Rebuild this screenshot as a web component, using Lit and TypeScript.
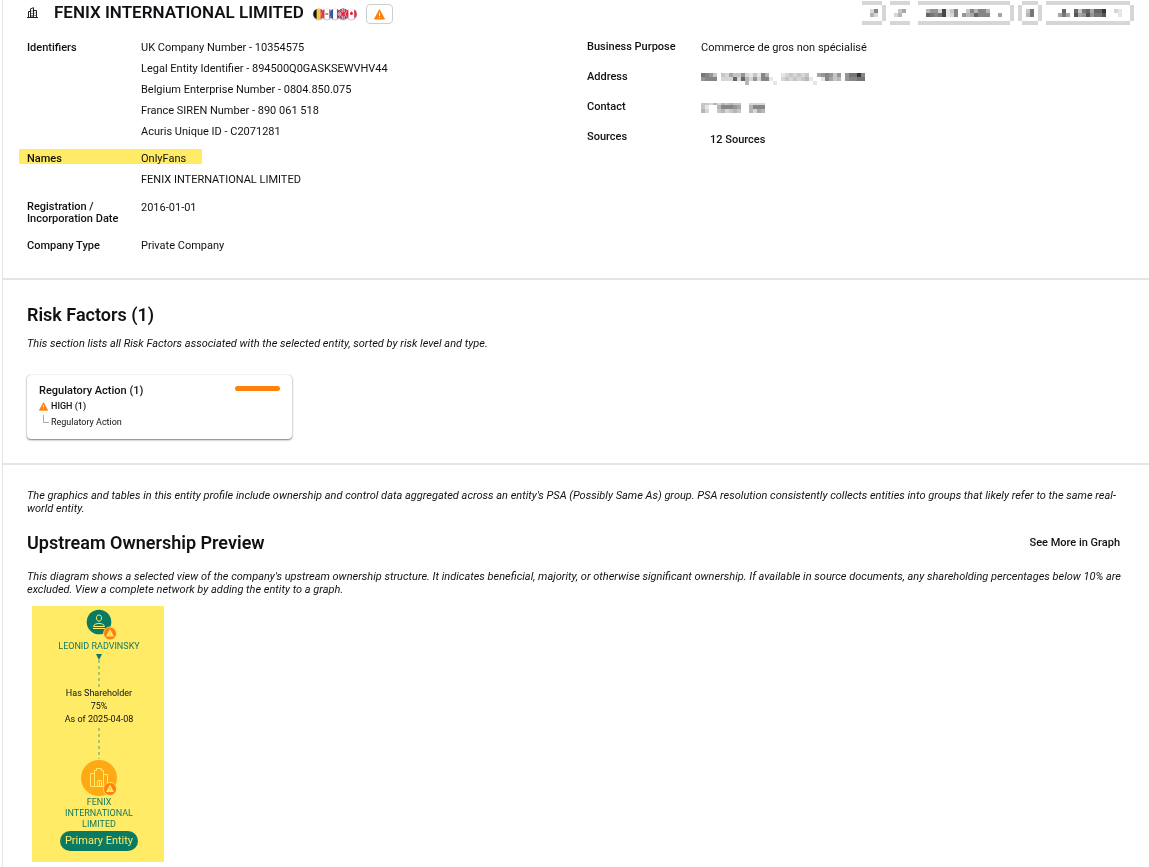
import { LitElement, html, svg, css } from "lit";
import { customElement, property } from "lit/decorators.js";

/** Redacted content: rows of hex grey levels, one digit per 4px cell. */
@customElement("redacted-mosaic")
export class RedactedMosaic extends LitElement {
  @property({ attribute: false }) rows: string[] = [];
  @property({ type: Number }) crop = 0;

  static styles = css`
    :host { display: block; }
    svg { display: block; }
  `;

  render() {
    const w = (this.rows[0]?.length ?? 0) * 4;
    const h = this.rows.length * 4 - this.crop;
    return html`<svg width=${w} height=${h} viewBox="0 ${this.crop} ${w} ${h}" shape-rendering="crispEdges" aria-hidden="true">
      ${this.rows.map((row, y) =>
        [...row].map((c, x) => {
          if (c === "f") return null;
          const v = parseInt(c, 16) * 16 + 6;
          return svg`<rect x=${x * 4} y=${y * 4} width="4" height="4" fill="rgb(${v},${v},${v})"></rect>`;
        })
      )}
    </svg>`;
  }
}

const toolbar = [
  { label: "Previous", rows: ["dddddf", "fffffd", "ffd8fd", "ffbdfd", "fffffd", "dddddf"] },
  { label: "Next", rows: ["dddddf", "ffffff", "ffcaff", "fdbfff", "ffffff", "dddddf"] },
  {
    label: "Profile action",
    rows: [
      "dddddddddddddddddddddddf",
      "fffffffffffffffffffffffd",
      "ffb99d4ec8ffc8b88bfffffd",
      "ff67874ed8f9ba6888ffaffd",
      "fffffffffffffffffffffffd",
      "dddddddddddddddddddddddf",
    ],
  },
  { label: "Options", rows: ["fddddf", "dffffd", "dfc7fd", "dfb7fd", "dffffd", "fddddf"] },
  {
    label: "Export",
    rows: [
      "dddddddddddddddddddddf",
      "fffffffffffffffffffffd",
      "ffff6ff6c76a663ffdeffd",
      "fffa7af5a959775fffeffd",
      "fffffffffffffffffffffd",
      "dddddddddddddddddddddf",
    ],
  },
];

const addressRows = [
  "789cfcdacc9dece8bfffedcdcdcffa989c9f97738",
  "9888fddd6d6bd9d88effdcdcdcbeffe8acbf98877",
  "fffffffffffbffffffefffffffffeffffffffffff",
];

const contactRows = ["ccdbdbcbccffdddd", "ceffb8889affb888", "bdffcbdcbcffbdab"];

const identifiers = [
  "UK Company Number - 10354575",
  "Legal Entity Identifier - 894500Q0GASKSEWVHV44",
  "Belgium Enterprise Number - 0804.850.075",
  "France SIREN Number - 890 061 518",
  "Acuris Unique ID - C2071281",
];

@customElement("app-root")
export class AppRoot extends LitElement {
  static styles = css`
    :host {
      display: block;
      min-height: 100vh;
      background: #fff;
      color: #0f1114;
      font: 11px/13px Roboto, "Liberation Sans", sans-serif;
    }
    * { box-sizing: border-box; }
    h1, h2, h3, p, dl, dd, ul { margin: 0; padding: 0; }
    ul { list-style: none; }
    svg { display: block; }
    a { color: inherit; text-decoration: none; }
    button { font: inherit; color: inherit; cursor: pointer; background: #fff; border: 0; padding: 0; }

    .profile { margin-left: 2px; border-left: 1px solid #e5e5e5; min-height: 100vh; }
    .section { padding: 0 26px 0 24px; }
    .divided { border-bottom: 2px solid #e5e5e5; }

    .header { display: flex; justify-content: space-between; height: 25px; padding-right: 15px; padding-left: 24px; }
    .heading, .tools { display: flex; align-items: center; }
    .tools { gap: 4px; padding-top: 1px; }
    .tool { display: block; }
    h1 { font-size: 17px; line-height: 24px; font-weight: 600; margin: 0 8px 2px 16px; white-space: nowrap; }
    .flags { margin: 3px 8px 0 0; }
    .alert { display: grid; place-items: center; width: 27px; height: 20px; margin-top: 3px; border: 1px solid #ccced2; border-radius: 4px; }

    .facts { display: grid; grid-template-columns: 1fr 1fr; gap: 24px; padding-top: 12px; padding-bottom: 22px; }
    .list { display: grid; gap: 6px; align-content: start; }
    .list.wide { gap: 9px; }
    .row { display: grid; grid-template-columns: 114px 1fr; position: relative; }
    dt { font-weight: 500; line-height: 12px; padding: 5px 0 4px; }
    dd { line-height: 21px; }
    .list.wide dt { padding-top: 4px; }
    .list.wide dd { min-height: 21px; }
    .tall { padding-top: 1px; }
    .tall dt { padding: 4px 0; }
    .marked::before {
      content: "";
      position: absolute;
      left: -8px;
      top: 1px;
      width: 183px;
      height: 15px;
      background: #ffeb66;
      mix-blend-mode: multiply;
    }
    .redacted { padding-top: 6px; }
    .sources { display: inline-block; padding: 3px 9px 0; line-height: 20px; font-weight: 500; }

    h2 { font-size: 18px; line-height: 22px; font-weight: 600; }
    .note { font-style: italic; }

    .risks { padding-top: 24px; padding-bottom: 24px; }
    .risks .note { margin-top: 11px; }
    .card {
      width: 265px;
      margin-top: 25px;
      padding: 8px 12px 9px;
      border-radius: 4px;
      box-shadow: 0 1px 2px rgba(0, 0, 0, 0.5), 0 0 1px rgba(0, 0, 0, 0.3);
    }
    .card-top { display: flex; justify-content: space-between; }
    h3 { font-size: 11px; line-height: 16px; font-weight: 500; }
    .level-bar { width: 45px; height: 5px; margin-top: 3px; border-radius: 3px; background: #ff810b; }
    .level { display: flex; align-items: center; gap: 3px; font-size: 9px; line-height: 15px; font-weight: 500; }
    .leaf { display: flex; gap: 2px; padding-left: 4px; font-size: 9px; line-height: 16px; }

    .ownership { padding-top: 24px; padding-bottom: 5px; }
    .title-row { display: flex; justify-content: space-between; align-items: center; margin: 17px 0 16px; padding-right: 3px; }
    .more { font-weight: 500; line-height: 18px; }

    .graph {
      display: flex;
      flex-direction: column;
      align-items: center;
      width: 132px;
      margin: 10px 0 0 5px;
      padding: 3px 0 11px 2px;
      background: #ffeb66;
      font-size: 9px;
      text-align: center;
    }
    .node { color: #17795f; }
    .person { line-height: 11px; }
    .company { width: 90px; line-height: 11px; }
    .edge { line-height: 13px; padding: 0 0 2px; }
    .pill { margin-top: 1px; padding: 0 5px; border-radius: 10px; background: #0b7a62; color: #ffeb66; font-size: 11px; line-height: 20px; }
  `;

  private warning(size: number) {
    return html`<svg width=${size} height=${size} viewBox="0 0 12 12" aria-hidden="true">
      <path d="M6 .8 11.5 11H.5Z" fill="#ff810b" stroke="#ff810b" stroke-linejoin="round"></path>
      <path d="M6 4v3.6M6 8.7v1" stroke="#fff" stroke-width="1.1"></path>
    </svg>`;
  }

  private badge(x: number, y: number) {
    return svg`<g transform="translate(${x} ${y})">
      <circle r="6.5" fill="#ff810b" stroke="#ffeb66" stroke-width=".8"></circle>
      <path d="M0-4.500 4 3H-4Z" fill="#ffeb66"></path>
      <path d="M0-2V1M0 1.600v.8" stroke="#ff810b" stroke-width=".6"></path>
    </g>`;
  }

  private flags() {
    return html`<svg class="flags" width="46" height="14" viewBox="0 0 48 14" role="img" aria-label="Belgium, Mexico, France, United Kingdom, Canada">
      <defs>
        ${[0, 1, 2, 3, 4].map((i) => svg`<clipPath id="flag${i}"><circle cx=${7 + i * 8.5} cy="7" r="5.7"></circle></clipPath>`)}
      </defs>
      ${[0, 1, 2, 3, 4].map((i) => svg`<circle cx=${7 + i * 8.5} cy="7.6" r="6.3" fill="#c8c8cc"></circle>`)}
      <g clip-path="url(#flag0)"><path fill="#171412" d="M0 0h5v14H0z"></path><path fill="#fbcb35" d="M5 0h4v14H5z"></path><path fill="#dd2f3c" d="M9 0h5v14H9z"></path></g>
      <g clip-path="url(#flag1)"><path fill="#fff" d="M9 0h14v14H9z"></path><path fill="#d5384a" d="M9 0h4v14H9zM18 0h4v14h-4z"></path><path fill="#b29855" d="M14 6h3v2h-3z"></path></g>
      <g clip-path="url(#flag2)"><path fill="#fff" d="M17 0h14v14H17z"></path><path fill="#3459a7" d="M18 0h4v14h-4z"></path><path fill="#dc3044" d="M26 0h5v14h-5z"></path></g>
      <g clip-path="url(#flag3)"><path fill="#2a3476" d="M26 0h14v14H26z"></path><path d="m26 1 13 12m0-12L26 13" stroke="#fff" stroke-width="1.6"></path><path d="M26 7h14M32.5 0v14" stroke="#fff" stroke-width="3"></path><path d="M26 7h14M32.5 0v14m-6-13 12 12m0-12-12 12" stroke="#d82c42" stroke-width="1.3"></path></g>
      <g clip-path="url(#flag4)"><path fill="#fff" d="M34 0h14v14H34z"></path><path fill="#e12a3f" d="M34 0h4v14h-4zM44 0h4v14h-4zM39.5 6l1-1 .7-1 .7 1 1 1-.8 2h-2z"></path></g>
    </svg>`;
  }

  render() {
    return html`
      <main class="profile">
        <header class="header">
          <div class="heading">
            <svg width="11" height="11" viewBox="0 0 11 11" fill="none" stroke="#202328" stroke-width="1" aria-hidden="true">
              <path d="M0 10.5h11M1.5 10V4.5h2M3.5 10V1.8L6.5.7V10M6.5 3.5h3V10M5 3.5v1M5 6v1M5 8v2M8 5.5v1M8 8v1"></path>
            </svg>
            <h1>FENIX INTERNATIONAL LIMITED</h1>
            ${this.flags()}
            <button class="alert" aria-label="Risk alert">${this.warning(11)}</button>
          </div>
          <div class="tools">
            ${toolbar.map((t) => html`<button class="tool" aria-label=${t.label}><redacted-mosaic .rows=${t.rows}></redacted-mosaic></button>`)}
          </div>
        </header>

        <section class="section divided facts">
          <dl class="list">
            <div class="row"><dt>Identifiers</dt><dd><ul>${identifiers.map((t) => html`<li>${t}</li>`)}</ul></dd></div>
            <div class="row marked"><dt>Names</dt><dd><ul><li>OnlyFans</li><li>FENIX INTERNATIONAL LIMITED</li></ul></dd></div>
            <div class="row tall"><dt>Registration /<br />Incorporation Date</dt><dd>2016-01-01</dd></div>
            <div class="row"><dt>Company Type</dt><dd>Private Company</dd></div>
          </dl>
          <dl class="list wide">
            <div class="row"><dt>Business Purpose</dt><dd>Commerce de gros non spécialisé</dd></div>
            <div class="row"><dt>Address</dt><dd class="redacted"><redacted-mosaic .rows=${addressRows}></redacted-mosaic></dd></div>
            <div class="row"><dt>Contact</dt><dd class="redacted"><redacted-mosaic .rows=${contactRows} crop="2"></redacted-mosaic></dd></div>
            <div class="row"><dt>Sources</dt><dd><a class="sources" href="#sources">12 Sources</a></dd></div>
          </dl>
        </section>

        <section class="section divided risks">
          <h2>Risk Factors (1)</h2>
          <p class="note">This section lists all Risk Factors associated with the selected entity, sorted by risk level and type.</p>
          <article class="card">
            <div class="card-top"><h3>Regulatory Action (1)</h3><div class="level-bar"></div></div>
            <div class="level">${this.warning(9)}<span>HIGH (1)</span></div>
            <div class="leaf">
              <svg width="6" height="10" viewBox="0 0 6 10" fill="none" stroke="#a4a6aa" aria-hidden="true"><path d="M.5 1v7.5H6"></path></svg>
              <span>Regulatory Action</span>
            </div>
          </article>
        </section>

        <section class="section ownership">
          <p class="note">The graphics and tables in this entity profile include ownership and control data aggregated across an entity's PSA (Possibly Same As) group. PSA resolution consistently collects entities into groups that likely refer to the same real-world entity.</p>
          <div class="title-row">
            <h2>Upstream Ownership Preview</h2>
            <a class="more" href="#graph">See More in Graph</a>
          </div>
          <p class="note">This diagram shows a selected view of the company's upstream ownership structure. It indicates beneficial, majority, or otherwise significant ownership. If available in source documents, any shareholding percentages below 10% are excluded. View a complete network by adding the entity to a graph.</p>

          <div class="graph" id="graph">
            <svg width="36" height="32" viewBox="0 0 36 32" aria-hidden="true">
              <circle cx="18" cy="13" r="12.3" fill="#0b7a62"></circle>
              <g fill="none" stroke="#ffeb66" stroke-width="1">
                <path d="M15.4 8.8c0-1.8 1.1-2.8 2.6-2.8s2.6 1 2.6 2.8c0 2-1.1 3.5-2.6 3.5s-2.6-1.500-2.6-3.500Z"></path>
                <path d="M12.500 17.500c.3-2 2.500-3 5.500-3s5.200 1 5.500 3ZM12 19.500h12"></path>
              </g>
              ${this.badge(29, 24.5)}
            </svg>
            <div class="node person">LEONID RADVINSKY</div>
            <svg width="10" height="35" viewBox="0 0 10 35" aria-hidden="true">
              <path d="M2 2h6L5 8Z" fill="#0b7a62"></path>
              <path d="M5 8v27" stroke="#5d9d63" stroke-dasharray="3 3"></path>
            </svg>
            <div class="edge">Has Shareholder<br />75%<br />As of 2025-04-08</div>
            <svg width="10" height="31" viewBox="0 0 10 31" aria-hidden="true">
              <path d="M5 0v31" stroke="#5d9d63" stroke-dasharray="3 3"></path>
            </svg>
            <svg width="38" height="38" viewBox="0 0 38 38" aria-hidden="true">
              <circle cx="19" cy="19" r="18" fill="#ffa915"></circle>
              <g fill="none" stroke="#ffeb66" stroke-width="1">
                <path d="M14.500 27.500h-4v-13h4M14.500 27.500v-16h2v-2h5v2h2v16M23.500 15.500h4v12h-13M17.500 27.500v-6h4v6M19.500 22v5"></path>
              </g>
              ${this.badge(30, 30)}
            </svg>
            <div class="node company">FENIX INTERNATIONAL LIMITED</div>
            <div class="pill">Primary Entity</div>
          </div>
        </section>
      </main>
    `;
  }
}
